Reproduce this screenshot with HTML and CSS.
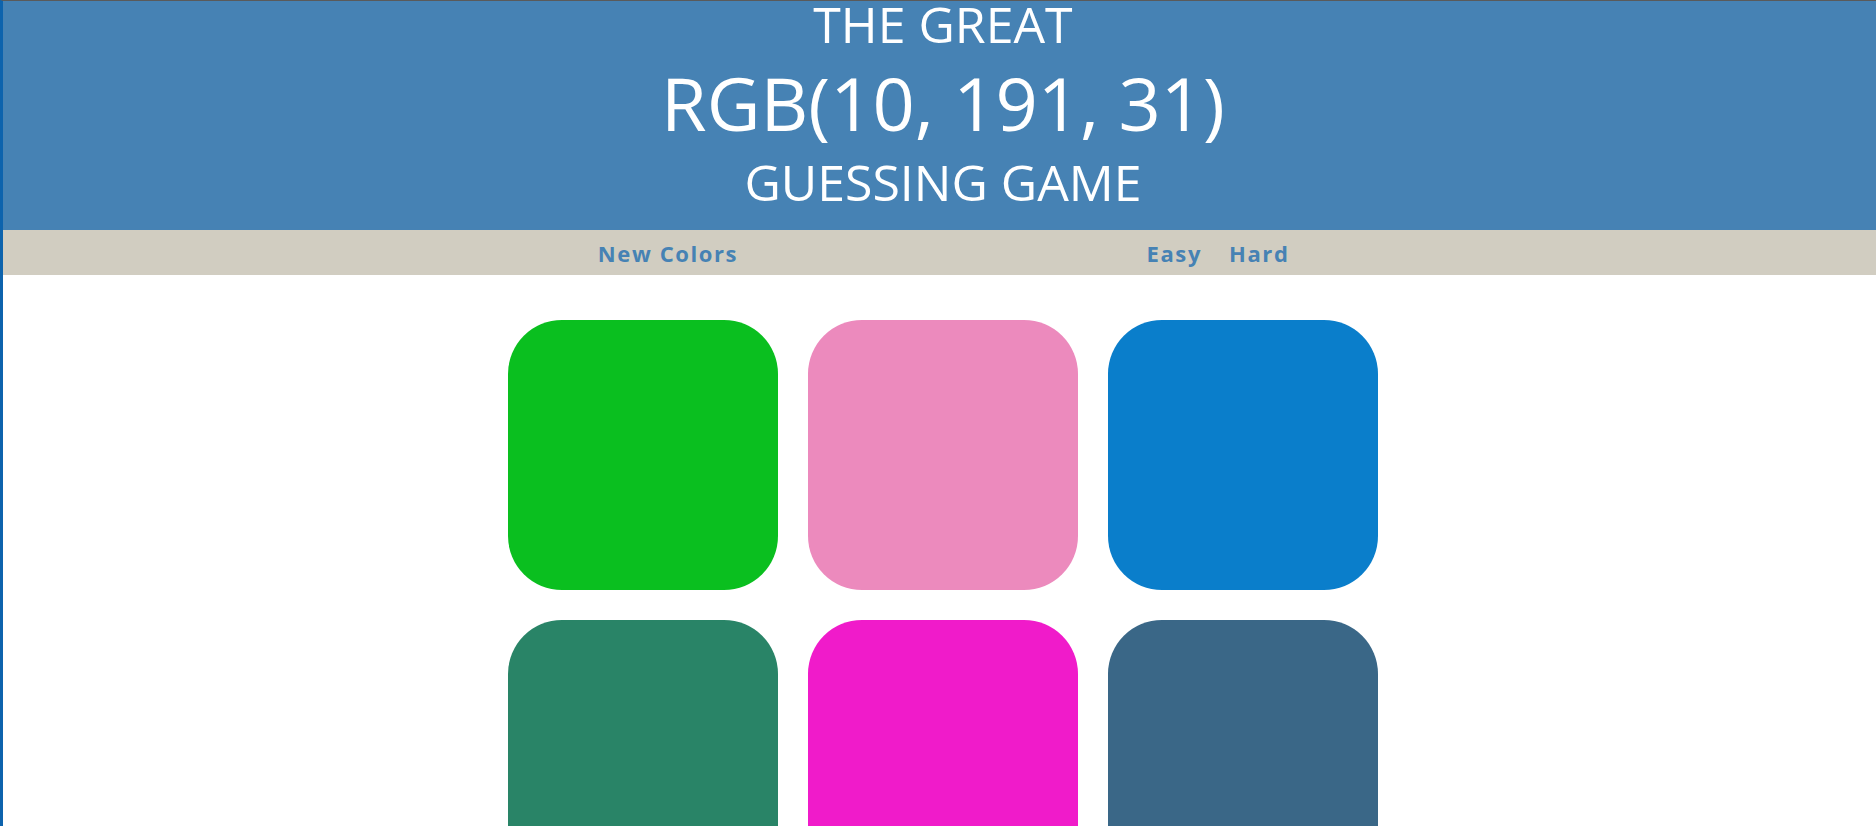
FILE: index.html
```html
<!DOCTYPE html>
<html lang="en">
<head>
<meta charset="utf-8">
<title>Color Game</title>
<link rel="stylesheet" href="styles.css">
</head>
<body>
<div class="page">
  <h1 class="title">
    <span class="line-small">The Great</span>
    <span class="line-big">RGB(10, 191, 31)</span>
    <span class="line-small last">Guessing Game</span>
  </h1>
  <nav class="stripe">
    <div class="group"><button class="btn">New Colors</button></div>
    <div class="group"><button class="btn">Easy</button><button class="btn">Hard</button></div>
  </nav>
  <main class="grid">
    <div class="square sq-green"></div>
    <div class="square sq-pink"></div>
    <div class="square sq-blue"></div>
    <div class="square sq-teal"></div>
    <div class="square sq-magenta"></div>
    <div class="square sq-slate"></div>
  </main>
</div>
</body>
</html>
```
FILE: styles.css
```css
html {
  overflow: hidden;
}
body {
  margin: 0;
  border-top: 1px solid #5a5a5a;
  border-left: 3px solid #0d63ad;
  background: #ffffff;
  font-family: "Open Sans", "Noto Sans", sans-serif;
  overflow: hidden;
  height: 825px;
}
.page {
  margin-right: -7px;
}
.title {
  margin: 0;
  padding: 0 0 24px;
  background: #4682b4;
  color: #ffffff;
  text-align: center;
  font-weight: 400;
  text-transform: uppercase;
}
.line-small {
  display: block;
  font-size: 50px;
  line-height: 46px;
}
.line-big {
  display: block;
  font-size: 74px;
  line-height: 112px;
}
.line-small.last {
  line-height: 47px;
}
.stripe {
  height: 45px;
  background: #d1cdc1;
  display: grid;
  grid-template-columns: 550px 550px;
  justify-content: center;
  align-items: center;
}
.group {
  display: flex;
  justify-content: center;
  gap: 27px;
}
.btn {
  border: none;
  background: none;
  padding: 0;
  font-family: "Open Sans", "Noto Sans", sans-serif;
  font-weight: 700;
  font-size: 22px;
  letter-spacing: 1.6px;
  color: #4682b4;
}
.grid {
  width: 870px;
  margin: 30px auto 0;
  padding: 15px;
  display: grid;
  grid-template-columns: repeat(3, 270px);
  gap: 30px;
}
.square {
  height: 270px;
  border-radius: 20%;
}
.sq-green { background: #0abf1f; }
.sq-pink { background: #ec8abd; }
.sq-blue { background: #0a7ecb; }
.sq-teal { background: #298467; }
.sq-magenta { background: #f01bca; }
.sq-slate { background: #3a6787; }
```
